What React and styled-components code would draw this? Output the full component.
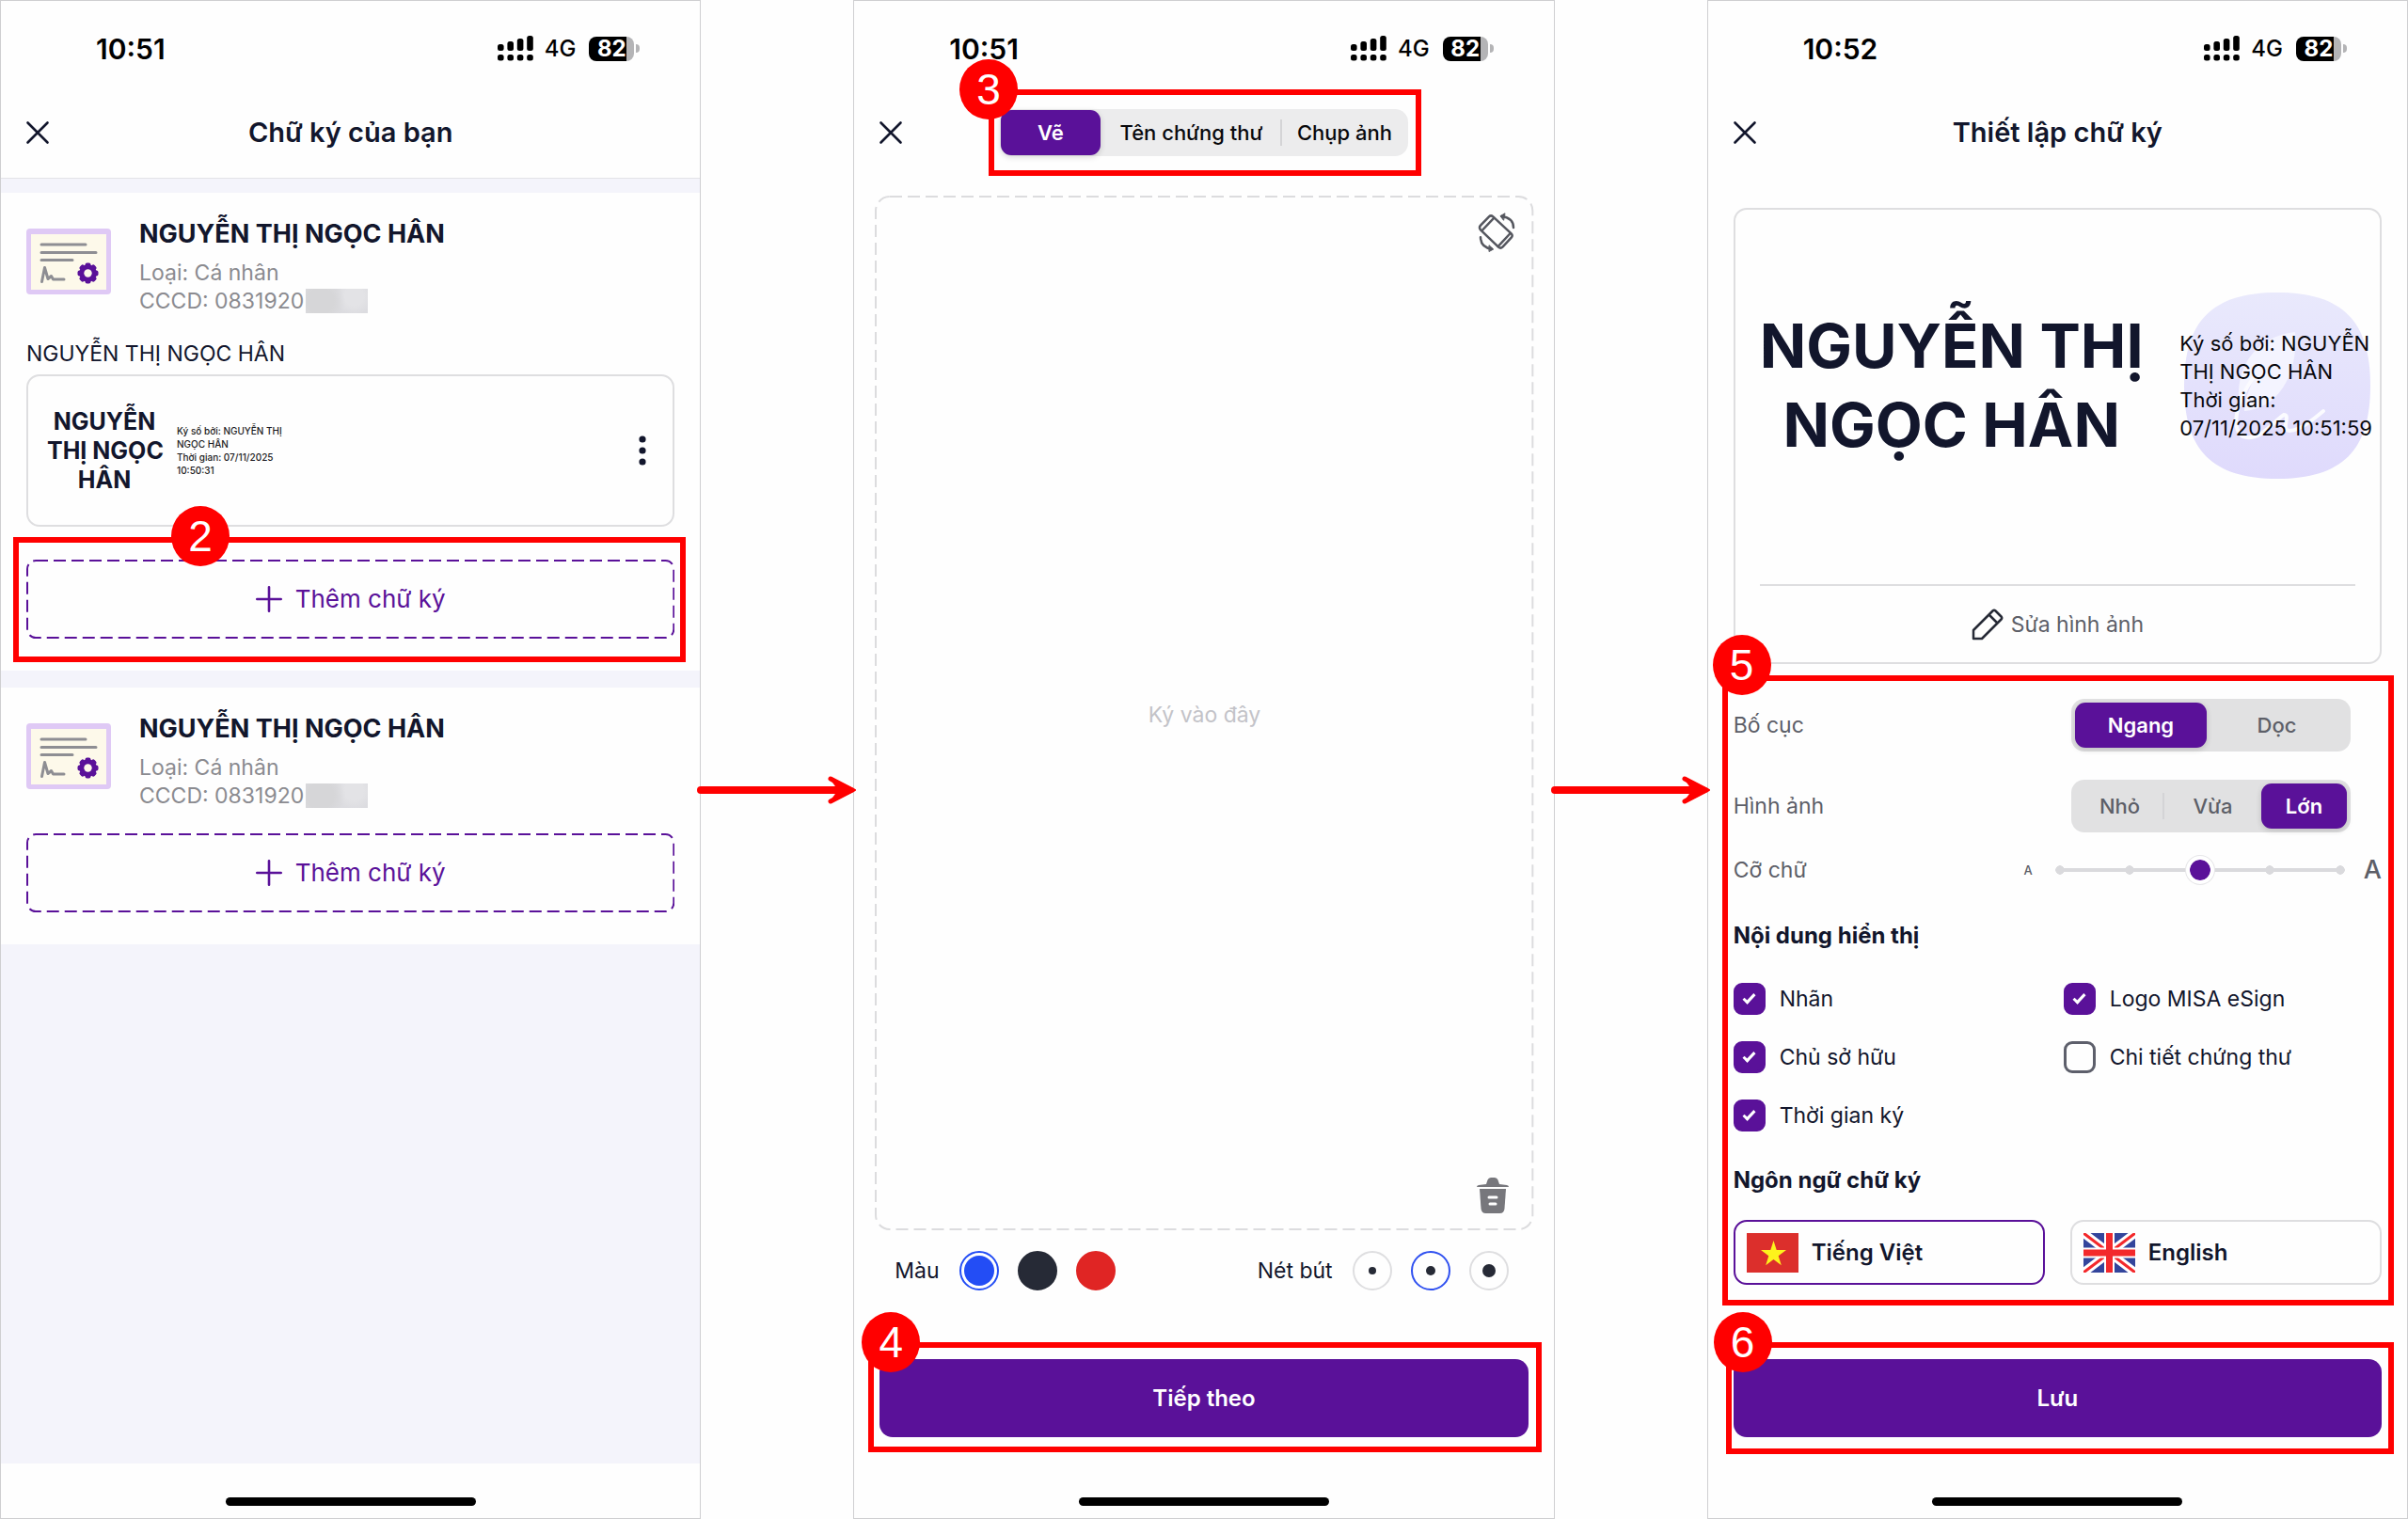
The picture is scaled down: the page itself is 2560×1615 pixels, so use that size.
import React, { useState } from "react";
import styled, { createGlobalStyle, css } from "styled-components";

const purple = "#5a1199";
const ink = "#12162c";
const red = "#ff0000";
const line = "#dedee0";

const GlobalStyle = createGlobalStyle`
  *, *::before, *::after { box-sizing: border-box; }
  body {
    margin: 0;
    background: #fefefe;
    color: ${ink};
    font-family: Inter, "Open Sans", sans-serif;
    font-size: 23px;
    line-height: 30px;
  }
  button, input { font: inherit; color: inherit; margin: 0; }
  button { cursor: pointer; }
  h1, h2, p { margin: 0; }
`;

/* ---------- page frame ---------- */

const Board = styled.main`
  display: grid;
  grid-template-columns: minmax(0, 1fr) 162px minmax(0, 1fr) 162px minmax(0, 1fr);
  min-height: 100vh;
`;

const Phone = styled.section`
  display: flex;
  flex-direction: column;
  min-width: 0;
  border: 1px solid #cfcfd1;
  background: #fefefe;
`;

const Gutter = styled.div`
  position: relative;
`;

const ArrowIcon = styled.svg`
  position: absolute;
  z-index: 2;
  top: 52%;
  left: 50%;
  width: 170px;
  height: 32px;
  transform: translate(-50%, -50%);
`;

const StatusRow = styled.div`
  display: flex;
  align-items: center;
  height: 92px;
  padding: 9px 64px 0 101px;
  color: #000;
`;

const Clock = styled.time`
  flex: 1;
  font-size: 30px;
  font-weight: 600;
`;

const Signal = styled.svg`
  width: 38px;
  height: 27px;
  margin-right: 12px;
`;

const Network = styled.span`
  margin-right: 14px;
  font-size: 24px;
  font-weight: 500;
`;

const Battery = styled.span`
  display: grid;
  place-items: center;
  width: 48px;
  height: 26px;
  border-radius: 8px;
  background: linear-gradient(90deg, #000 84%, #b4b4b6 84%);
  color: #fff;
  font-size: 24px;
  font-weight: 700;
  line-height: 26px;
`;

const BatteryTip = styled.span`
  width: 4px;
  height: 9px;
  margin-left: 2px;
  border-radius: 0 4px 4px 0;
  background: #b4b4b6;
`;

const Header = styled.header`
  display: grid;
  grid-template-columns: 30px 1fr 30px;
  align-items: center;
  height: 96px;
  padding: 0 24px;
`;

const Title = styled.h1`
  font-size: 29px;
  font-weight: 600;
  line-height: 36px;
  text-align: center;
`;

const IconButton = styled.button`
  display: grid;
  place-items: center;
  padding: 0;
  border: 0;
  background: none;
`;

const HomeArea = styled.footer`
  display: flex;
  justify-content: center;
  height: 58px;
  padding-top: 36px;
`;

const HomeBar = styled.span`
  width: 266px;
  height: 9px;
  border-radius: 5px;
  background: #000;
`;

const Spacer = styled.div`
  flex: 1;
`;

/* ---------- numbered callouts ---------- */

const CalloutHost = styled.div`
  position: relative;
`;

const CalloutFrame = styled.div`
  position: absolute;
  z-index: 1;
  inset: ${(p) => p.$inset};
  border: 6px solid ${red};
  pointer-events: none;
`;

const CalloutBadge = styled.span`
  position: absolute;
  left: ${(p) => p.$x - 37}px;
  top: ${(p) => p.$y - 38}px;
  display: grid;
  place-items: center;
  width: 62px;
  height: 64px;
  border-radius: 50%;
  background: ${red};
  color: #fff;
  font-family: "Liberation Sans", Arial, sans-serif;
  font-size: 46px;
  line-height: 64px;
`;

/* ---------- certificate list ---------- */

const List = styled.div`
  display: flex;
  flex: 1;
  flex-direction: column;
  gap: 18px;
  padding-top: 15px;
  border-top: 1px solid #e3e3e8;
  background: #f4f4fb;
`;

const CertCard = styled.article`
  padding: 26px 27px 34px;
  background: #fefefe;
`;

const CertHead = styled.div`
  display: flex;
  gap: 30px;
`;

const CertIcon = styled.svg`
  flex: none;
  width: 90px;
  height: 70px;
  margin-top: 12px;
`;

const CertName = styled.h2`
  margin-bottom: 8px;
  font-size: 27px;
  font-weight: 700;
  line-height: 36px;
`;

const CertMeta = styled.p`
  display: flex;
  align-items: center;
  gap: 2px;
  color: #8b8b90;
`;

const Masked = styled.span`
  width: 66px;
  height: 26px;
  background:
    radial-gradient(circle at 24% 50%, #d6d6d8 0 14px, transparent 26px),
    radial-gradient(circle at 78% 30%, #e3e3e6 0 10px, transparent 20px),
    #dcdce0;
`;

const SignatureLabel = styled.p`
  margin-top: 26px;
`;

const SignatureItem = styled.div`
  display: flex;
  align-items: center;
  gap: 16px;
  height: 162px;
  margin: 7px 0 35px;
  padding: 0 20px;
  border: 2px solid ${line};
  border-radius: 14px;
`;

const SignatureMark = styled.div`
  width: 122px;
  font-size: 25px;
  font-weight: 700;
  line-height: 31px;
  text-align: center;
  white-space: nowrap;
`;

const SignatureInfo = styled.div`
  flex: 1;
  color: #1b1b22;
  font-size: 10px;
  font-weight: 500;
  line-height: 14px;
`;

const TextLine = styled.span`
  display: block;
  white-space: nowrap;
`;

const AddButton = styled.button`
  position: relative;
  display: flex;
  align-items: center;
  justify-content: center;
  gap: 14px;
  width: 100%;
  height: 84px;
  padding: 0;
  border: 0;
  background: none;
  color: ${purple};
  font-size: 26px;
`;

const CertAction = styled.div`
  margin-top: 25px;
`;

const DashSvg = styled.svg`
  position: absolute;
  inset: 0;
  width: 100%;
  height: 100%;
  pointer-events: none;
`;

const DashRect = styled.rect`
  x: 1px;
  y: 1px;
  width: calc(100% - 2px);
  height: calc(100% - 2px);
  fill: none;
  stroke: ${(p) => p.$color};
  stroke-width: 2px;
  stroke-dasharray: 13 6;
`;

/* ---------- segmented control ---------- */

const Segments = styled.div`
  display: flex;
  align-items: stretch;
  width: ${(p) => p.$width}px;
  height: ${(p) => p.$height}px;
  padding: ${(p) => p.$pad}px;
  border-radius: 14px;
  background: ${(p) => p.$bg};
`;

const Segment = styled.button`
  position: relative;
  flex: ${(p) => p.$grow} 1 0;
  padding: 0;
  border: 0;
  border-radius: 11px;
  background: none;
  color: ${(p) => p.$color};
  font-size: 22px;
  font-weight: 500;
  white-space: nowrap;
  ${(p) =>
    p.$on &&
    css`
      background: ${purple};
      box-shadow: 0 2px 6px rgba(0, 0, 0, 0.16);
      color: #fff;
      font-weight: 600;
    `}
  ${(p) =>
    p.$divided &&
    css`
      &::after {
        content: "";
        position: absolute;
        right: 0;
        top: 20%;
        bottom: 20%;
        width: 2px;
        background: #d4d4d6;
      }
    `}
`;

/* ---------- drawing screen ---------- */

const CenterSlot = styled.div`
  display: flex;
  justify-content: center;
`;

const Canvas = styled.div`
  position: relative;
  display: flex;
  flex: 1;
  flex-direction: column;
  align-items: flex-end;
  justify-content: space-between;
  margin: 19px 21px 0 22px;
  padding: 18px 20px;
`;

const CanvasHint = styled.p`
  align-self: center;
  color: #c3c3c8;
`;

const Tools = styled.div`
  display: flex;
  justify-content: space-between;
  margin: 22px 48px 73px 43px;
`;

const ToolGroup = styled.fieldset`
  display: flex;
  align-items: center;
  gap: 20px;
  margin: 0;
  padding: 0;
  border: 0;
`;

const ToolName = styled.span`
  margin-right: 1px;
`;

const roundRadio = css`
  appearance: none;
  display: grid;
  place-items: center;
  width: 42px;
  height: 42px;
  border-radius: 50%;
  cursor: pointer;
`;

const Swatch = styled.input`
  ${roundRadio}
  border: 2px solid ${(p) => p.$color};
  background: ${(p) => p.$color};
  &:checked {
    background: #fff;
  }
  &:checked::before {
    content: "";
    width: 32px;
    height: 32px;
    border-radius: 50%;
    background: ${(p) => p.$color};
  }
`;

const Stroke = styled.input`
  ${roundRadio}
  border: 2px solid ${line};
  &::before {
    content: "";
    width: ${(p) => p.$dot}px;
    height: ${(p) => p.$dot}px;
    border-radius: 50%;
    background: #262a36;
  }
  &:checked {
    border-color: #2f50f0;
  }
`;

const PrimarySlot = styled.div`
  margin: 0 27px 28px;
`;

const Primary = styled.button`
  display: block;
  width: 100%;
  height: 83px;
  border: 0;
  border-radius: 14px;
  background: ${purple};
  color: #fff;
  font-size: 24px;
  font-weight: 600;
`;

/* ---------- setup screen ---------- */

const Preview = styled.div`
  margin: 32px 27px 0;
  border: 2px solid ${line};
  border-radius: 14px;
`;

const PreviewArea = styled.div`
  display: flex;
  align-items: center;
  justify-content: space-between;
  height: 398px;
  padding: 0 8px 24px 26px;
`;

const PreviewMark = styled.div`
  font-size: 65px;
  font-weight: 700;
  line-height: 84px;
  text-align: center;
`;

const PreviewInfo = styled.div`
  display: grid;
  place-items: center start;
  color: #08080c;
  font-size: 22px;
  & > * {
    grid-area: 1 / 1;
  }
`;

const LogoSvg = styled.svg`
  width: 198px;
  height: 198px;
  margin-left: 5px;
`;

const PreviewFoot = styled.div`
  display: flex;
  justify-content: center;
  margin: 0 26px;
  padding: 23px 0 22px;
  border-top: 2px solid ${line};
`;

const EditButton = styled.button`
  display: flex;
  align-items: center;
  gap: 8px;
  height: 36px;
  padding: 0;
  border: 0;
  background: none;
  color: #5d5f68;
`;

const Settings = styled.div`
  padding-top: 37px;
`;

const SettingsSlot = styled.div`
  margin: 0 27px;
`;

const SettingRow = styled.div`
  display: flex;
  align-items: center;
  justify-content: space-between;
  height: ${(p) => p.$height}px;
  margin-bottom: 30px;
  padding-right: ${(p) => p.$right}px;
  color: #5d5f68;
`;

const SizeControl = styled.span`
  display: flex;
  align-items: center;
`;

const SizeLetter = styled.span`
  font-size: ${(p) => (p.$large ? 27 : 13)}px;
  font-weight: 500;
`;

const RangeTrack = styled.span`
  --tick: radial-gradient(circle closest-side, #dadadd 90%, transparent);
  display: flex;
  width: 328px;
  margin: 0 10px 0 14px;
  padding: 0 10px;
  background:
    var(--tick) 0% 50% / 10px 12px no-repeat,
    var(--tick) 25% 50% / 10px 12px no-repeat,
    var(--tick) 75% 50% / 10px 12px no-repeat,
    var(--tick) 100% 50% / 10px 12px no-repeat,
    linear-gradient(#dadadd, #dadadd) 50% 50% / 298px 4px no-repeat;
  background-origin: content-box;
`;

const Range = styled.input`
  appearance: none;
  flex: none;
  width: calc(100% + 20px);
  height: 30px;
  margin: 0 -10px;
  background: transparent;
  &::-webkit-slider-thumb {
    appearance: none;
    width: 30px;
    height: 30px;
    border: 4px solid #fff;
    border-radius: 50%;
    background: ${purple};
    background-clip: padding-box;
    box-shadow: 0 0 0 1px #e6e6e8;
  }
`;

const SectionTitle = styled.h2`
  margin: ${(p) => p.$top}px 0 ${(p) => p.$bottom}px;
  font-size: 24px;
  font-weight: 700;
  line-height: 32px;
`;

const Checks = styled.div`
  display: grid;
  grid-template-columns: 351px 1fr;
  gap: 28px 0;
`;

const CheckLabel = styled.label`
  display: flex;
  align-items: center;
  gap: 15px;
  height: 34px;
`;

const CheckBox = styled.input`
  appearance: none;
  display: grid;
  place-items: center;
  width: 34px;
  height: 34px;
  border: 3px solid #5d5f6b;
  border-radius: 9px;
  &:checked {
    border-color: ${purple};
    background: ${purple};
  }
  &:checked::before {
    content: "";
    width: 13px;
    height: 7px;
    margin-top: -4px;
    border: solid #fff;
    border-width: 0 0 3px 3px;
    transform: rotate(-47deg);
  }
`;

const Languages = styled.div`
  display: grid;
  grid-template-columns: 1fr 1fr;
  gap: 27px;
`;

const Language = styled.button`
  display: flex;
  align-items: center;
  gap: 14px;
  height: 69px;
  padding: 0 12px;
  border: 2px solid ${(p) => (p.$on ? purple : line)};
  border-radius: 14px;
  background: none;
  font-size: 24px;
  font-weight: 600;
`;

const Flag = styled.svg`
  width: 55px;
  height: 42px;
`;

/* ---------- shared pieces ---------- */

function StatusBar({ time }) {
  return (
    <StatusRow>
      <Clock>{time}</Clock>
      <Signal viewBox="0 0 38 27" aria-hidden="true">
        {[0, 1, 2, 3].map((i) => {
          const top = [9, 6, 3, 0][i];
          return (
            <React.Fragment key={i}>
              <rect x={i * 10.4} y={top} width="6.6" height={16 - top} rx="2.5" />
              <rect x={i * 10.4} y="20" width="6.6" height="6.6" rx="2.5" />
            </React.Fragment>
          );
        })}
      </Signal>
      <Network>4G</Network>
      <Battery>82</Battery>
      <BatteryTip />
    </StatusRow>
  );
}

function CloseButton() {
  return (
    <IconButton aria-label="Đóng">
      <svg width="26" height="26" viewBox="0 0 26 26" stroke={ink} strokeWidth="2.6" strokeLinecap="round">
        <path d="M2.5 2.5 23.5 23.5M23.5 2.5 2.5 23.5" />
      </svg>
    </IconButton>
  );
}

function Callout({ number, inset, x, y, children }) {
  return (
    <CalloutHost>
      {children}
      <CalloutFrame $inset={inset}>
        <CalloutBadge $x={x} $y={y}>{number}</CalloutBadge>
      </CalloutFrame>
    </CalloutHost>
  );
}

function Dashes({ color, radius }) {
  return (
    <DashSvg aria-hidden="true">
      <DashRect $color={color} rx={radius} />
    </DashSvg>
  );
}

function Arrow() {
  return (
    <Gutter>
      <ArrowIcon viewBox="0 0 170 32" fill="none" stroke={red} strokeLinecap="round" strokeLinejoin="round" aria-hidden="true">
        <path d="M4 16H158" strokeWidth="8" />
        <path d="M142 4 165 16 142 28" strokeWidth="5" />
        <path d="M142 3.5 168 16 142 28.5 151 16Z" fill={red} strokeWidth="2" />
      </ArrowIcon>
    </Gutter>
  );
}

function AddSignature() {
  return (
    <AddButton>
      <Dashes color={purple} radius={9} />
      <svg width="28" height="28" viewBox="0 0 28 28" stroke={purple} strokeWidth="2.6" strokeLinecap="round" aria-hidden="true">
        <path d="M14 1.3V26.7M1.3 14H26.7" />
      </svg>
      Thêm chữ ký
    </AddButton>
  );
}

function CertificateHead() {
  return (
    <CertHead>
      <CertIcon viewBox="0 0 90 70" aria-hidden="true">
        <rect width="90" height="70" rx="4" fill="#dfc9f5" />
        <rect x="5" y="6" width="80" height="59" fill="#fdf9ea" />
        <g fill="none" stroke="#8e8e93" strokeWidth="3" strokeLinecap="round" strokeLinejoin="round">
          <path d="M16 17H63M16 25.5H74M16 33.5H49" />
          <path d="M16.5 56.5 19.5 41.5 23 53.5 26.5 50.5 28.5 54H40" />
        </g>
        <g fill={purple}>
          <circle cx="65.500" cy="47.500" r="9.300" />
          {[0, 45, 90, 135, 180, 225, 270, 315].map((a) => (
            <rect key={a} x="62.500" y="36.500" width="6" height="6" rx="2" transform={`rotate(${a} 65.5 47.5)`} />
          ))}
        </g>
        <circle cx="65.500" cy="47.500" r="4.200" fill="#fdf9ea" />
      </CertIcon>
      <div>
        <CertName>NGUYỄN THỊ NGỌC HÂN</CertName>
        <CertMeta>Loại: Cá nhân</CertMeta>
        <CertMeta>
          CCCD: 0831920
          <Masked />
        </CertMeta>
      </div>
    </CertHead>
  );
}

function SegmentedControl({ items, initial, label, width, height, pad, bg, color, dividers }) {
  const [value, setValue] = useState(initial);
  return (
    <Segments role="group" aria-label={label} $width={width} $height={height} $pad={pad} $bg={bg}>
      {items.map(([text, grow], i) => (
        <Segment
          key={text}
          $grow={grow}
          $on={value === text}
          $color={color}
          $divided={dividers.includes(i)}
          aria-pressed={value === text}
          onClick={() => setValue(text)}
        >
          {text}
        </Segment>
      ))}
    </Segments>
  );
}

/* ---------- screens ---------- */

function SignatureListScreen() {
  return (
    <Phone>
      <StatusBar time="10:51" />
      <Header>
        <CloseButton />
        <Title>Chữ ký của bạn</Title>
      </Header>
      <List>
        <CertCard>
          <CertificateHead />
          <SignatureLabel>NGUYỄN THỊ NGỌC HÂN</SignatureLabel>
          <SignatureItem>
            <SignatureMark>
              <TextLine>NGUYỄN</TextLine>
              <TextLine>THỊ NGỌC</TextLine>
              <TextLine>HÂN</TextLine>
            </SignatureMark>
            <SignatureInfo>
              <TextLine>Ký số bởi: NGUYỄN THỊ</TextLine>
              <TextLine>NGỌC HÂN</TextLine>
              <TextLine>Thời gian: 07/11/2025</TextLine>
              <TextLine>10:50:31</TextLine>
            </SignatureInfo>
            <IconButton aria-label="Tùy chọn">
              <svg width="24" height="34" viewBox="0 0 24 34" fill={ink}>
                <circle cx="12" cy="5" r="3.600" />
                <circle cx="12" cy="17" r="3.600" />
                <circle cx="12" cy="29" r="3.600" />
              </svg>
            </IconButton>
          </SignatureItem>
          <Callout number="2" inset="-24px -12px -25px -14px" x={199} y={-1}>
            <AddSignature />
          </Callout>
        </CertCard>
        <CertCard>
          <CertificateHead />
          <CertAction>
            <AddSignature />
          </CertAction>
        </CertCard>
      </List>
      <HomeArea>
        <HomeBar />
      </HomeArea>
    </Phone>
  );
}

function DrawScreen() {
  return (
    <Phone>
      <StatusBar time="10:51" />
      <Header>
        <CloseButton />
        <CenterSlot>
          <Callout number="3" inset="-21px -14px -21px -12px" x={0} y={0}>
            <SegmentedControl
              label="Kiểu chữ ký"
              items={[["Vẽ", 106], ["Tên chứng thư", 193], ["Chụp ảnh", 133]]}
              initial="Vẽ"
              width={434}
              height={50}
              pad={1}
              bg="#ececed"
              color="#08080c"
              dividers={[1]}
            />
          </Callout>
        </CenterSlot>
      </Header>
      <Canvas>
        <Dashes color="#dcdcde" radius={15} />
        <IconButton aria-label="Xoay">
          <svg width="40" height="42" viewBox="32 33 120 126" fill="none" stroke="#55575f" strokeWidth="7.500" strokeLinecap="round" strokeLinejoin="round">
            <path d="M41 74 68 46Q74 40 81 46L139 100Q145 106 139 113L112 142Q105 149 98 143L41 88Q35 81 41 74Z" />
            <path d="M84 50 46 90M136 99 97 141" />
            <path d="M146 81Q146 50 108 45" />
            <path d="M118 36 104 44 114 57Z" fill="#55575f" strokeWidth="3" />
            <path d="M41 112Q42 144 76 149" />
            <path d="M69 138 82 150 69 157Z" fill="#55575f" strokeWidth="3" />
          </svg>
        </IconButton>
        <CanvasHint>Ký vào đây</CanvasHint>
        <IconButton aria-label="Xóa">
          <svg width="48" height="38" viewBox="0 0 48 38">
            <g fill="#77777c">
              <path d="M17 7 18.500 2.500Q19.500 0 22 0H26Q28.500 0 29.500 2.500L31 7 39 8Q41 8.500 41 10H7Q7 8.500 9 8Z" />
              <path d="M10 12H38L36.500 33Q36 38 31.500 38H16.500Q12 38 11.500 33Z" />
            </g>
            <path d="M20 21H28M21 28H27" stroke="#fff" strokeWidth="3" strokeLinecap="round" />
          </svg>
        </IconButton>
      </Canvas>
      <Tools>
        <ToolGroup aria-label="Màu">
          <ToolName>Màu</ToolName>
          <Swatch type="radio" name="color" aria-label="Xanh" $color="#234df5" defaultChecked />
          <Swatch type="radio" name="color" aria-label="Đen" $color="#262a36" />
          <Swatch type="radio" name="color" aria-label="Đỏ" $color="#e02524" />
        </ToolGroup>
        <ToolGroup aria-label="Nét bút">
          <ToolName>Nét bút</ToolName>
          <Stroke type="radio" name="stroke" aria-label="Mảnh" $dot={8} />
          <Stroke type="radio" name="stroke" aria-label="Trung bình" $dot={10} defaultChecked />
          <Stroke type="radio" name="stroke" aria-label="Đậm" $dot={14} />
        </ToolGroup>
      </Tools>
      <PrimarySlot>
        <Callout number="4" inset="-18px -14px -16px -12px" x={24} y={0}>
          <Primary>Tiếp theo</Primary>
        </Callout>
      </PrimarySlot>
      <HomeArea>
        <HomeBar />
      </HomeArea>
    </Phone>
  );
}

function EsignLogo() {
  return (
    <LogoSvg viewBox="0 0 198 198" aria-hidden="true">
      <defs>
        <linearGradient id="logoFill" x1="0" y1="0" x2="0" y2="1">
          <stop offset="0" stopColor="#e9e9fc" />
          <stop offset="1" stopColor="#dfdafc" />
        </linearGradient>
      </defs>
      <path d="M99 0C168 0 198 30 198 99S168 198 99 198 0 168 0 99 30 0 99 0Z" fill="url(#logoFill)" />
      <g fill="none" stroke="#fbfbff" strokeLinecap="round">
        <path d="M118 42C82 46 56 72 58 114 62 110 66 100 76 88 68 104 64 116 64 126 96 124 122 92 118 42Z" fill="#f4f4ff" stroke="none" />
        <path d="M74 90C58 112 48 142 62 153 80 160 96 136 106 130 114 130 102 146 112 147 124 146 136 136 148 126" strokeWidth="4" />
      </g>
    </LogoSvg>
  );
}

const checks = [
  ["Nhãn", true],
  ["Logo MISA eSign", true],
  ["Chủ sở hữu", true],
  ["Chi tiết chứng thư", false],
  ["Thời gian ký", true],
];

function VietnamFlag() {
  return (
    <Flag viewBox="0 0 55 42" aria-hidden="true">
      <rect width="55" height="42" fill="#dc2f2c" />
      <path d="M28.500 8 31.700 18H42L33.700 24.200 36.800 34.300 28.500 28.100 20.200 34.300 23.300 24.200 15 18H25.300Z" fill="#fdf31c" />
    </Flag>
  );
}

function BritishFlag() {
  return (
    <Flag viewBox="0 0 55 42" aria-hidden="true">
      <rect width="55" height="42" fill="#33459c" />
      <path d="M0 0 55 42M55 0 0 42" stroke="#fff" strokeWidth="9" />
      <path d="M0 0 27 20.500M55 0 28 20.500M0 42 27 21.500M55 42 28 21.500" stroke="#f3292c" strokeWidth="3" />
      <path d="M27.500 0V42M0 21H55" stroke="#fff" strokeWidth="11" />
      <path d="M27.500 0V42M0 21H55" stroke="#f3292c" strokeWidth="7" />
    </Flag>
  );
}

function SetupScreen() {
  const [language, setLanguage] = useState("vi");
  return (
    <Phone>
      <StatusBar time="10:52" />
      <Header>
        <CloseButton />
        <Title>Thiết lập chữ ký</Title>
      </Header>
      <Preview>
        <PreviewArea>
          <PreviewMark>
            <TextLine>NGUYỄN THỊ</TextLine>
            <TextLine>NGỌC HÂN</TextLine>
          </PreviewMark>
          <PreviewInfo>
            <EsignLogo />
            <div>
              <TextLine>Ký số bởi: NGUYỄN</TextLine>
              <TextLine>THỊ NGỌC HÂN</TextLine>
              <TextLine>Thời gian:</TextLine>
              <TextLine>07/11/2025 10:51:59</TextLine>
            </div>
          </PreviewInfo>
        </PreviewArea>
        <PreviewFoot>
          <EditButton>
            <svg width="34" height="34" viewBox="0 0 34 34" fill="none" stroke="#262a36" strokeWidth="2.500" strokeLinejoin="round" aria-hidden="true">
              <path d="M2 32V23L22.500 2.500Q24 1 25.500 2.500L31.500 8.500Q33 10 31.500 11.500L11 32Z" />
              <path d="M18.500 6.500 27.500 15.500" />
            </svg>
            Sửa hình ảnh
          </EditButton>
        </PreviewFoot>
      </Preview>
      <SettingsSlot>
        <Callout number="5" inset="12px -13px -22px -12px" x={21} y={-11}>
          <Settings>
            <SettingRow $height={56} $right={33}>
              Bố cục
              <SegmentedControl
                label="Bố cục"
                items={[["Ngang", 140], ["Dọc", 149]]}
                initial="Ngang"
                width={297}
                height={56}
                pad={4}
                bg="#e1e1e2"
                color="#5d5f68"
                dividers={[]}
              />
            </SettingRow>
            <SettingRow $height={56} $right={33}>
              Hình ảnh
              <SegmentedControl
                label="Hình ảnh"
                items={[["Nhỏ", 95], ["Vừa", 103], ["Lớn", 91]]}
                initial="Lớn"
                width={297}
                height={56}
                pad={4}
                bg="#e1e1e2"
                color="#5d5f68"
                dividers={[0]}
              />
            </SettingRow>
            <SettingRow $height={20} $right={0}>
              <label htmlFor="font-size">Cỡ chữ</label>
              <SizeControl>
                <SizeLetter>A</SizeLetter>
                <RangeTrack>
                  <Range id="font-size" type="range" min="0" max="4" step="1" defaultValue="2" />
                </RangeTrack>
                <SizeLetter $large>A</SizeLetter>
              </SizeControl>
            </SettingRow>
            <SectionTitle $top={44} $bottom={34}>Nội dung hiển thị</SectionTitle>
            <Checks>
              {checks.map(([text, on]) => (
                <CheckLabel key={text}>
                  <CheckBox type="checkbox" defaultChecked={on} />
                  {text}
                </CheckLabel>
              ))}
            </Checks>
            <SectionTitle $top={36} $bottom={26}>Ngôn ngữ chữ ký</SectionTitle>
            <Languages>
              <Language $on={language === "vi"} aria-pressed={language === "vi"} onClick={() => setLanguage("vi")}>
                <VietnamFlag />
                Tiếng Việt
              </Language>
              <Language $on={language === "en"} aria-pressed={language === "en"} onClick={() => setLanguage("en")}>
                <BritishFlag />
                English
              </Language>
            </Languages>
          </Settings>
        </Callout>
      </SettingsSlot>
      <Spacer />
      <PrimarySlot>
        <Callout number="6" inset="-18px -13px -18px -8px" x={18} y={0}>
          <Primary>Lưu</Primary>
        </Callout>
      </PrimarySlot>
      <HomeArea>
        <HomeBar />
      </HomeArea>
    </Phone>
  );
}

export default function App() {
  return (
    <>
      <GlobalStyle />
      <Board>
        <SignatureListScreen />
        <Arrow />
        <DrawScreen />
        <Arrow />
        <SetupScreen />
      </Board>
    </>
  );
}
